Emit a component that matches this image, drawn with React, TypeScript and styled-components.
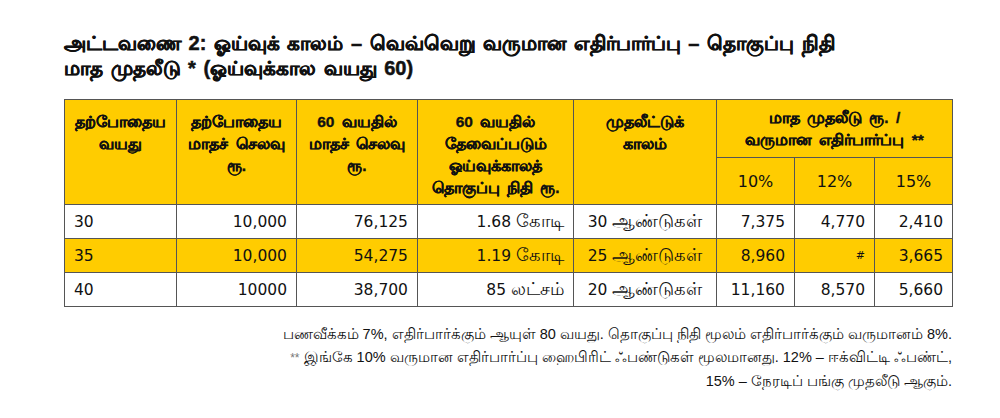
import React from "react";
import styled, { createGlobalStyle } from "styled-components";

const Global = createGlobalStyle`
  html, body { margin: 0; padding: 0; background: #ffffff; }
  body { font-family: "Noto Sans", "DejaVu Sans", sans-serif; color: #111; }
`;

const Page = styled.div`
  width: 1000px;
  height: 418px;
  box-sizing: border-box;
  padding: 31px 0 0 64px;
  display: flex;
  flex-direction: column;
`;

const Title = styled.h1`
  margin: 0;
  font-family: "Liberation Sans", "Noto Sans", sans-serif;
  font-weight: bold;
  font-size: 20px;
  line-height: 25px;
  word-spacing: 2px;
  color: #111;
  -webkit-text-stroke: 0.5px #111;
  white-space: nowrap;
`;

const Table = styled.table`
  margin-top: 18px;
  width: 888px;
  table-layout: fixed;
  border-collapse: collapse;
  border: 1px solid #555;
  font-family: "DejaVu Sans", "Noto Sans", sans-serif;
`;

const Col = styled.col<{ $w: number }>`
  width: ${(p) => p.$w}px;
`;

const HeadRow = styled.tr<{ $h: number }>`
  height: ${(p) => p.$h}px;
`;

const HeadCell = styled.th<{ $top?: boolean }>`
  background: #ffcc00;
  border: 1px solid #555;
  font-family: "Liberation Sans", "Noto Sans", sans-serif;
  font-weight: bold;
  font-size: 15.5px;
  line-height: 22px;
  word-spacing: 3px;
  text-align: center;
  vertical-align: ${(p) => (p.$top ? "top" : "middle")};
  padding: ${(p) => (p.$top ? "11px 2px 0" : "1px 2px 0")};
  color: #111;
  white-space: nowrap;
  -webkit-text-stroke: 0.35px #111;
`;

const PctCell = styled.th`
  background: #ffcc00;
  border: 1px solid #555;
  font-family: "DejaVu Sans", sans-serif;
  font-weight: normal;
  font-size: 16px;
  text-align: center;
  vertical-align: middle;
  color: #111;
`;

const Row = styled.tr<{ $hl?: boolean }>`
  height: 34px;
  background: ${(p) => (p.$hl ? "#ffcc00" : "#ffffff")};
`;

const Cell = styled.td<{ $align?: "left" | "right" | "center"; $small?: boolean }>`
  border: 1px solid #555;
  font-size: ${(p) => (p.$small ? "11px" : "15.5px")};
  text-align: ${(p) => p.$align ?? "right"};
  padding: 0 9px;
  color: #111;
  white-space: nowrap;
  font-family: "DejaVu Sans", "Noto Sans", sans-serif;
`;

const Ta = styled.span`
  font-size: 1.13em;
`;

const Notes = styled.div`
  width: 888px;
  margin-top: 16px;
  text-align: right;
  font-family: "Liberation Sans", "Noto Sans", sans-serif;
  font-size: 14.5px;
  line-height: 23px;
  color: #111;
  white-space: nowrap;
`;

const Star = styled.span`
  color: #777;
  font-size: 12px;
`;

type CellData = { num: string; ta?: string };

const rows: CellData[][] = [
  [{ num: "30" }, { num: "10,000" }, { num: "76,125" }, { num: "1.68 ", ta: "கோடி" }, { num: "30 ", ta: "ஆண்டுகள்" }, { num: "7,375" }, { num: "4,770" }, { num: "2,410" }],
  [{ num: "35" }, { num: "10,000" }, { num: "54,275" }, { num: "1.19 ", ta: "கோடி" }, { num: "25 ", ta: "ஆண்டுகள்" }, { num: "8,960" }, { num: "#" }, { num: "3,665" }],
  [{ num: "40" }, { num: "10000" }, { num: "38,700" }, { num: "85 ", ta: "லட்சம்" }, { num: "20 ", ta: "ஆண்டுகள்" }, { num: "11,160" }, { num: "8,570" }, { num: "5,660" }],
];

const widths = [112, 120, 121, 156, 143, 78, 80, 78];

export default function App() {
  return (
    <Page>
      <Global />
      <Title>
        அட்டவணை 2: ஓய்வுக் காலம் – வெவ்வெறு வருமான எதிர்பார்ப்பு – தொகுப்பு நிதி
        <br />
        மாத முதலீடு * (ஓய்வுக்கால வயது 60)
      </Title>
      <Table>
        <colgroup>
          {widths.map((w, i) => (
            <Col key={i} $w={w} />
          ))}
        </colgroup>
        <thead>
          <HeadRow $h={58}>
            <HeadCell $top rowSpan={2}>
              தற்போதைய
              <br />
              வயது
            </HeadCell>
            <HeadCell $top rowSpan={2}>
              தற்போதைய
              <br />
              மாதச் செலவு
              <br />
              ரூ.
            </HeadCell>
            <HeadCell $top rowSpan={2}>
              60 வயதில்
              <br />
              மாதச் செலவு
              <br />
              ரூ.
            </HeadCell>
            <HeadCell $top rowSpan={2}>
              60 வயதில்
              <br />
              தேவைப்படும்
              <br />
              ஓய்வுக்காலத்
              <br />
              தொகுப்பு நிதி ரூ.
            </HeadCell>
            <HeadCell $top rowSpan={2}>
              முதலீட்டுக்
              <br />
              காலம்
            </HeadCell>
            <HeadCell colSpan={3}>
              மாத முதலீடு ரூ. /
              <br />
              வருமான எதிர்பார்ப்பு **
            </HeadCell>
          </HeadRow>
          <HeadRow $h={47}>
            <PctCell>10%</PctCell>
            <PctCell>12%</PctCell>
            <PctCell>15%</PctCell>
          </HeadRow>
        </thead>
        <tbody>
          {rows.map((r, i) => (
            <Row key={i} $hl={i === 1}>
              {r.map((c, j) => (
                <Cell key={j} $align={j === 0 ? "left" : j === 4 ? "center" : "right"} $small={c.num === "#"}>
                  {c.num}
                  {c.ta && <Ta>{c.ta}</Ta>}
                </Cell>
              ))}
            </Row>
          ))}
        </tbody>
      </Table>
      <Notes>
        பணவீக்கம் 7%, எதிர்பார்க்கும் ஆயுள் 80 வயது. தொகுப்பு நிதி மூலம் எதிர்பார்க்கும் வருமானம் 8%.
        <br />
        <Star>**</Star> இங்கே 10% வருமான எதிர்பார்ப்பு ஹைபிரிட் ஃபண்டுகள் மூலமானது. 12% – ஈக்விட்டி ஃபண்ட்,
        <br />
        15% – நேரடிப் பங்கு முதலீடு ஆகும்.
      </Notes>
    </Page>
  );
}
